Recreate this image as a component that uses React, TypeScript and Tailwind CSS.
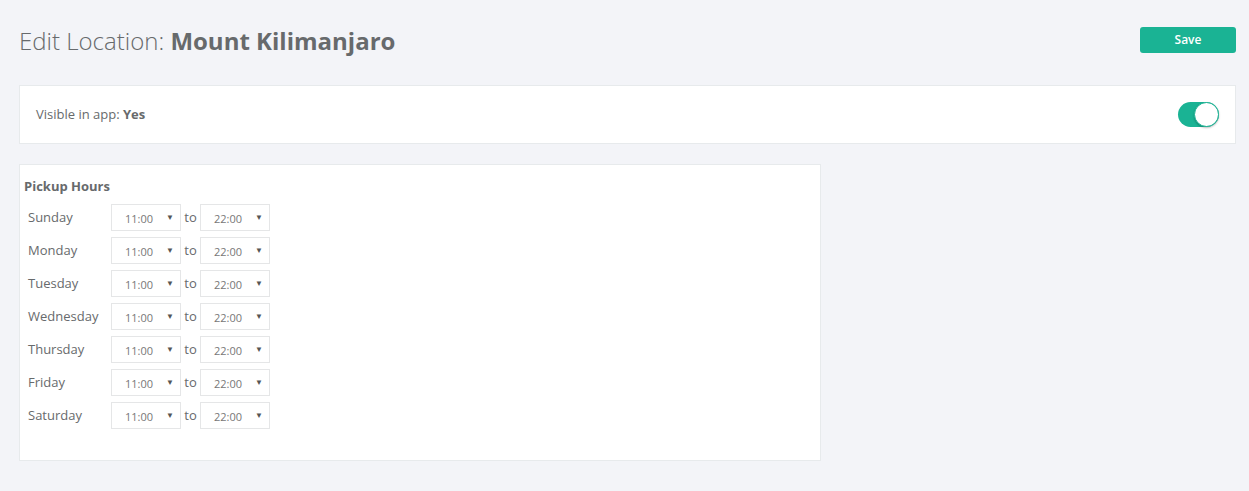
const days = ['Sunday', 'Monday', 'Tuesday', 'Wednesday', 'Thursday', 'Friday', 'Saturday']

function TimeSelect({ value }: { value: string }) {
  return (
    <div className="flex h-[27px] w-[70px] items-center justify-between border border-[#e5e6e7] bg-white pl-[13px] pr-[6px] text-[11px] text-[#777]">
      <span className="mt-[3px]">{value}</span>
      <span className="mb-[1px] text-[8px] leading-none text-[#555]">▼</span>
    </div>
  )
}

function Toggle() {
  return (
    <div className="relative h-[25px] w-[41px] rounded-full bg-[#1ab394]">
      <span className="absolute right-0 top-0 h-[25px] w-[25px] rounded-full border border-[#1ab394] bg-white shadow-[0_1px_2px_rgba(0,0,0,0.25)]" />
    </div>
  )
}

export default function App() {
  return (
    <div
      className="min-h-[491px] bg-[#f3f4f8] pl-[19px] pr-[13px] pt-[27px] text-[#676a6c]"
      style={{ fontFamily: '"Open Sans", "Liberation Sans", sans-serif' }}
    >
      {/* Header */}
      <div className="flex items-start justify-between">
        <h1 className="text-[24px] leading-[28px] text-[#676a6c]">
          <span className="font-light">Edit Location: </span>
          <span className="font-bold">Mount Kilimanjaro</span>
        </h1>
        <button className="h-[26px] w-[96px] rounded-[3px] bg-[#1ab394] text-[12px] font-semibold text-white">
          Save
        </button>
      </div>

      {/* Visible in app */}
      <div className="mt-[30px] flex h-[59px] items-center justify-between border border-[#e7eaec] bg-white pl-[16px] pr-[16px]">
        <div className="text-[13px]">
          Visible in app: <span className="font-bold">Yes</span>
        </div>
        <Toggle />
      </div>

      {/* Pickup hours */}
      <div className="mt-[20px] h-[297px] w-[802px] border border-[#e7eaec] bg-white pl-[4px] pt-[12px]">
        <div className="text-[13px] font-bold leading-[18px]">Pickup Hours</div>
        <div className="mt-[9px] flex flex-col gap-[6px] pl-[4px]">
          {days.map(day => (
            <div key={day} className="flex items-center text-[13px]">
              <div className="w-[83px]">{day}</div>
              <TimeSelect value="11:00" />
              <span className="w-[19px] text-center">to</span>
              <TimeSelect value="22:00" />
            </div>
          ))}
        </div>
      </div>
    </div>
  )
}
